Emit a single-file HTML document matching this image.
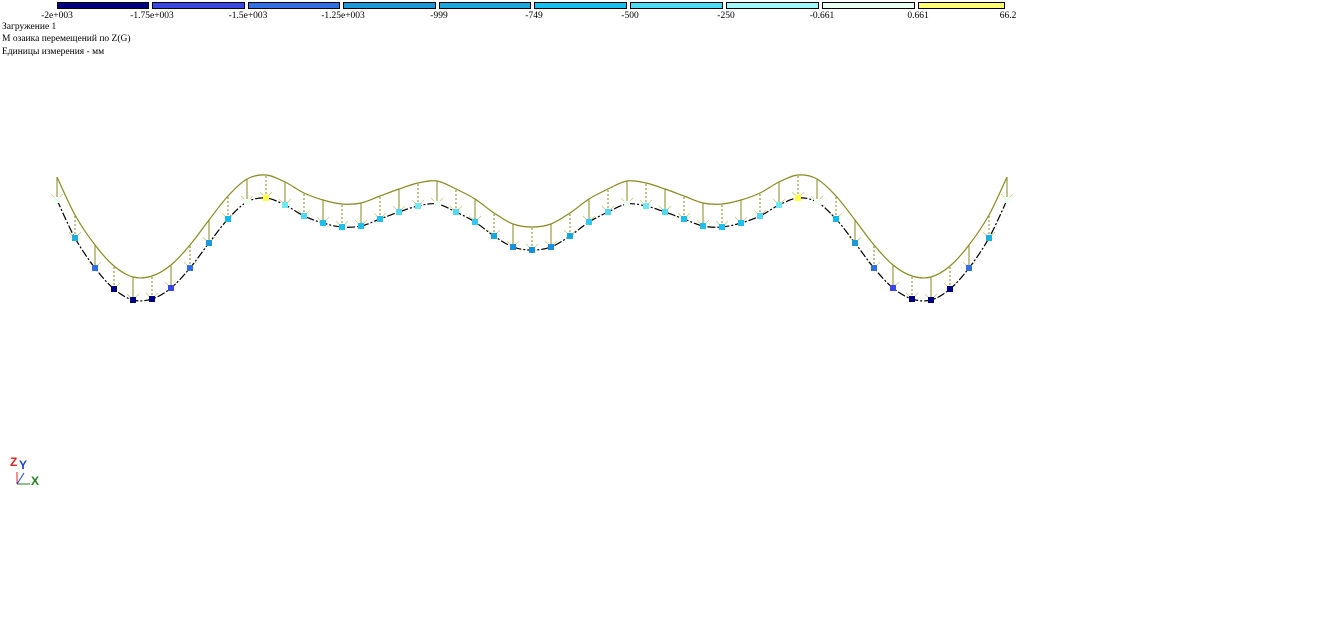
<!DOCTYPE html>
<html><head><meta charset="utf-8"><style>
html,body{margin:0;padding:0;background:#fff;width:1328px;height:626px;overflow:hidden}
svg{position:absolute;left:0;top:0}
text{font-family:"Liberation Serif","DejaVu Serif",serif;font-size:9.5px;fill:#000}
</style></head><body>
<svg id="s" width="1328" height="626" xmlns="http://www.w3.org/2000/svg">
<g id="leg"></g>
<text x="2" y="29">Загружение 1</text>
<text x="2" y="41">М озаика перемещений по Z(G)</text>
<text x="2" y="54">Единицы измерения  - мм</text>
<g id="g"></g>
<g>
<text x="10" y="466" style="font-family:'Liberation Sans',sans-serif;font-size:12px;font-weight:bold;fill:#e02020">Z</text>
<text x="19" y="469" style="font-family:'Liberation Sans',sans-serif;font-size:12px;font-weight:bold;fill:#2040d0">Y</text>
<text x="31" y="485" style="font-family:'Liberation Sans',sans-serif;font-size:12px;font-weight:bold;fill:#208020">X</text>
<line x1="17" y1="484" x2="30" y2="484" stroke="#208020" stroke-width="1"/>
<line x1="17" y1="484" x2="17" y2="472" stroke="#e02020" stroke-width="1"/>
<line x1="17" y1="484" x2="24" y2="473" stroke="#2040d0" stroke-width="1"/>
</g>
</svg>
<script>
var NS="http://www.w3.org/2000/svg";
function el(p,t,a,txt){var e=document.createElementNS(NS,t);for(var k in a)e.setAttribute(k,a[k]);if(txt)e.textContent=txt;p.appendChild(e);return e;}
var leg=document.getElementById('leg');
var bx=[57,152,248,343,439,534,630,726,822,918,1008];
var cols=["#000080","#3a46e6","#2f6fe8","#1a98d8","#18a8e0","#14c0f0","#48dcf4","#a0f8f8","#ecfff4","#ffff70"];
var labs=["-2e+003","-1.75e+003","-1.5e+003","-1.25e+003","-999","-749","-500","-250","-0.661","0.661","66.2"];
for(var i=0;i<10;i++){el(leg,'rect',{x:bx[i]+0.5,y:2.5,width:bx[i+1]-bx[i]-4,height:6,fill:cols[i],stroke:"#000","stroke-width":1});}
for(var i=0;i<11;i++){el(leg,'text',{x:bx[i],y:18,"text-anchor":"middle"},labs[i]);}
var L=[[57,200,"p"],[75,238,"#1ab0e0"],[95,268,"#2f6fe0"],[114,289,"#000080"],[133,300,"#000080"],[152,299,"#000080"],[171,288,"#3a46e6"],[190,268,"#2f6fe0"],[209,243,"#1a9ad6"],[228,219,"#14b8e8"],[247,202,"p"],[266,198,"#ffff40"],[285,205,"#70e8f0"],[304,216,"#50d8f0"],[323,223,"#20c0ec"],[342,227,"#20c0ec"],[361,226,"#20c0ec"],[380,219,"#20c0ec"],[399,212,"#50d8f0"],[418,206,"#70e8f0"],[437,204,"p"],[456,212,"#50d8f0"],[475,222,"#30c8f0"],[494,236,"#14a8e0"],[513,247,"#1a90dc"],[532,250,"#1a90dc"]];
var N=L.slice();
for(var i=L.length-2;i>=0;i--)N.push([1064-L[i][0],L[i][1],L[i][2]]);
var g=document.getElementById('g');
var up=N.map(function(n,i){return [n[0],n[1]-23];});
function smooth(P){var d="M"+P[0][0]+","+P[0][1];for(var i=0;i<P.length-1;i++){var p0=P[Math.max(0,i-1)],p1=P[i],p2=P[i+1],p3=P[Math.min(P.length-1,i+2)];
d+=" C"+(p1[0]+(p2[0]-p0[0])/6)+","+(p1[1]+(p2[1]-p0[1])/6)+" "+(p2[0]-(p3[0]-p1[0])/6)+","+(p2[1]-(p3[1]-p1[1])/6)+" "+p2[0]+","+p2[1];}return d;}
N.forEach(function(n,i){
 el(g,'line',{x1:n[0],y1:n[1],x2:up[i][0],y2:up[i][1],stroke:"#8a8a20","stroke-width":1,"stroke-dasharray":(i%2?"2,2":"none")});
 el(g,'path',{d:"M"+(n[0]-6)+","+(n[1]-6)+" L"+n[0]+","+n[1]+" L"+(n[0]+6)+","+(n[1]-6),fill:"none",stroke:"#c8c880","stroke-width":0.8});
});
el(g,'path',{d:smooth(up),fill:"none",stroke:"#8a8a20","stroke-width":1.2});
el(g,'path',{d:smooth(N),fill:"none",stroke:"#000","stroke-width":1.2,"stroke-dasharray":"8,2,2,2"});
N.forEach(function(n){
 if(n[2]=="p"){el(g,'rect',{x:n[0]-3,y:n[1]-3,width:6,height:6,fill:"#ecfff0"});return;}
 el(g,'rect',{x:n[0]-3,y:n[1]-3,width:6,height:6,fill:n[2]});
});
</script>
</body></html>
